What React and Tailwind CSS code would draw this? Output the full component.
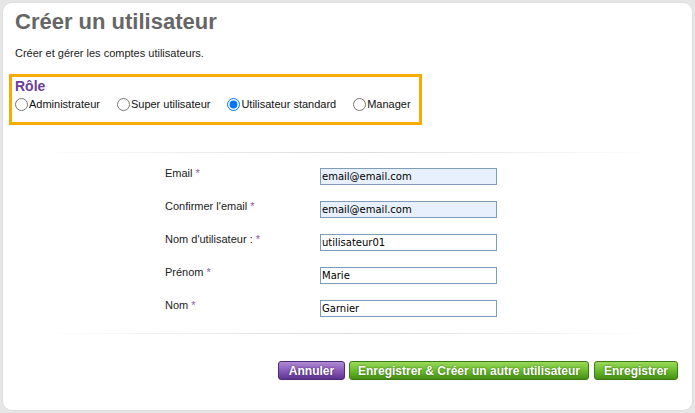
import React, { useState } from 'react';

const roles = ['Administrateur', 'Super utilisateur', 'Utilisateur standard', 'Manager'];

const fields = [
  { label: "Email", value: 'email@email.com', autofill: true },
  { label: "Confirmer l'email", value: 'email@email.com', autofill: true },
  { label: "Nom d'utilisateur :", value: 'utilisateur01' },
  { label: 'Prénom', value: 'Marie' },
  { label: 'Nom', value: 'Garnier' },
];

const Separator = () => (
  <div className="mx-[34px] h-px bg-gradient-to-r from-transparent via-[#dcdcdc] to-transparent" />
);

const App = () => {
  const [role, setRole] = useState('Utilisateur standard');

  return (
    <div className="w-[695px] h-[413px] bg-[#e6e6e6] p-[2px] font-['Liberation_Sans',Arial,sans-serif]">
      <div className="h-full bg-white rounded-[10px] border border-[#dedede] flex flex-col">
        <h1 className="pl-[12px] pt-[6px] text-[22px] leading-[26px] font-bold text-[#666666]">
          Créer un utilisateur
        </h1>
        <p className="pl-[12px] mt-[12px] text-[11px] leading-[13px] text-[#222]">
          Créer et gérer les comptes utilisateurs.
        </p>

        {/* Rôle */}
        <div className="ml-[6px] mt-[14px] w-[413px] h-[51px] border-[3px] border-[#f7aa00] pl-[3px] pt-[1px]">
          <div className="text-[14px] leading-[17px] font-bold text-[#6b3d99]">Rôle</div>
          <div className="flex items-center mt-[3px] text-[11px] leading-[13px] text-[#111] whitespace-nowrap">
            {roles.map((r) => (
              <label key={r} className="flex items-center mr-[17px]">
                <input
                  type="radio"
                  name="role"
                  checked={role === r}
                  onChange={() => setRole(r)}
                  className="m-0 w-[13px] h-[13px] accent-[#0075ff]"
                />
                <span className="ml-px">{r}</span>
              </label>
            ))}
          </div>
        </div>

        <div className="mt-[27px]">
          <Separator />
        </div>

        {/* Formulaire */}
        <div className="mt-[14px] flex flex-col">
          {fields.map((f) => (
            <div key={f.label} className="flex items-start h-[33px]">
              <label className="ml-[162px] w-[155px] text-[11px] leading-[13px] text-[#222]">
                {f.label} <span className="text-[#8a5ca8]">*</span>
              </label>
              <input
                type="text"
                defaultValue={f.value}
                className={`mt-px w-[177px] h-[17px] border border-[#7f9db9] px-px text-[10px] leading-[13px] text-black font-['DejaVu_Sans',Verdana,sans-serif] outline-none ${
                  f.autofill ? 'bg-[#e8f0fe]' : 'bg-white'
                }`}
              />
            </div>
          ))}
        </div>

        <div className="mt-px">
          <Separator />
        </div>

        {/* Boutons */}
        <div className="mt-[27px] flex justify-end gap-[4px] pr-[14px]">
          <button className="w-[67px] h-[19px] rounded-[3px] border border-[#4f2a78] bg-gradient-to-b from-[#b08ad3] via-[#8a5bb8] to-[#5e3390] text-white text-[12px] leading-[14px] font-bold [text-shadow:0_0_2px_#3a1a5e]">
            Annuler
          </button>
          <button className="w-[240px] h-[19px] rounded-[3px] border border-[#3d7a12] bg-gradient-to-b from-[#9ad95a] via-[#6cbd2c] to-[#468f15] text-white text-[12px] leading-[14px] font-bold whitespace-nowrap [text-shadow:0_0_2px_#2d5e0a]">
            Enregistrer &amp; Créer un autre utilisateur
          </button>
          <button className="ml-px w-[84px] h-[19px] rounded-[3px] border border-[#3d7a12] bg-gradient-to-b from-[#9ad95a] via-[#6cbd2c] to-[#468f15] text-white text-[12px] leading-[14px] font-bold [text-shadow:0_0_2px_#2d5e0a]">
            Enregistrer
          </button>
        </div>
      </div>
    </div>
  );
};

export default App;
